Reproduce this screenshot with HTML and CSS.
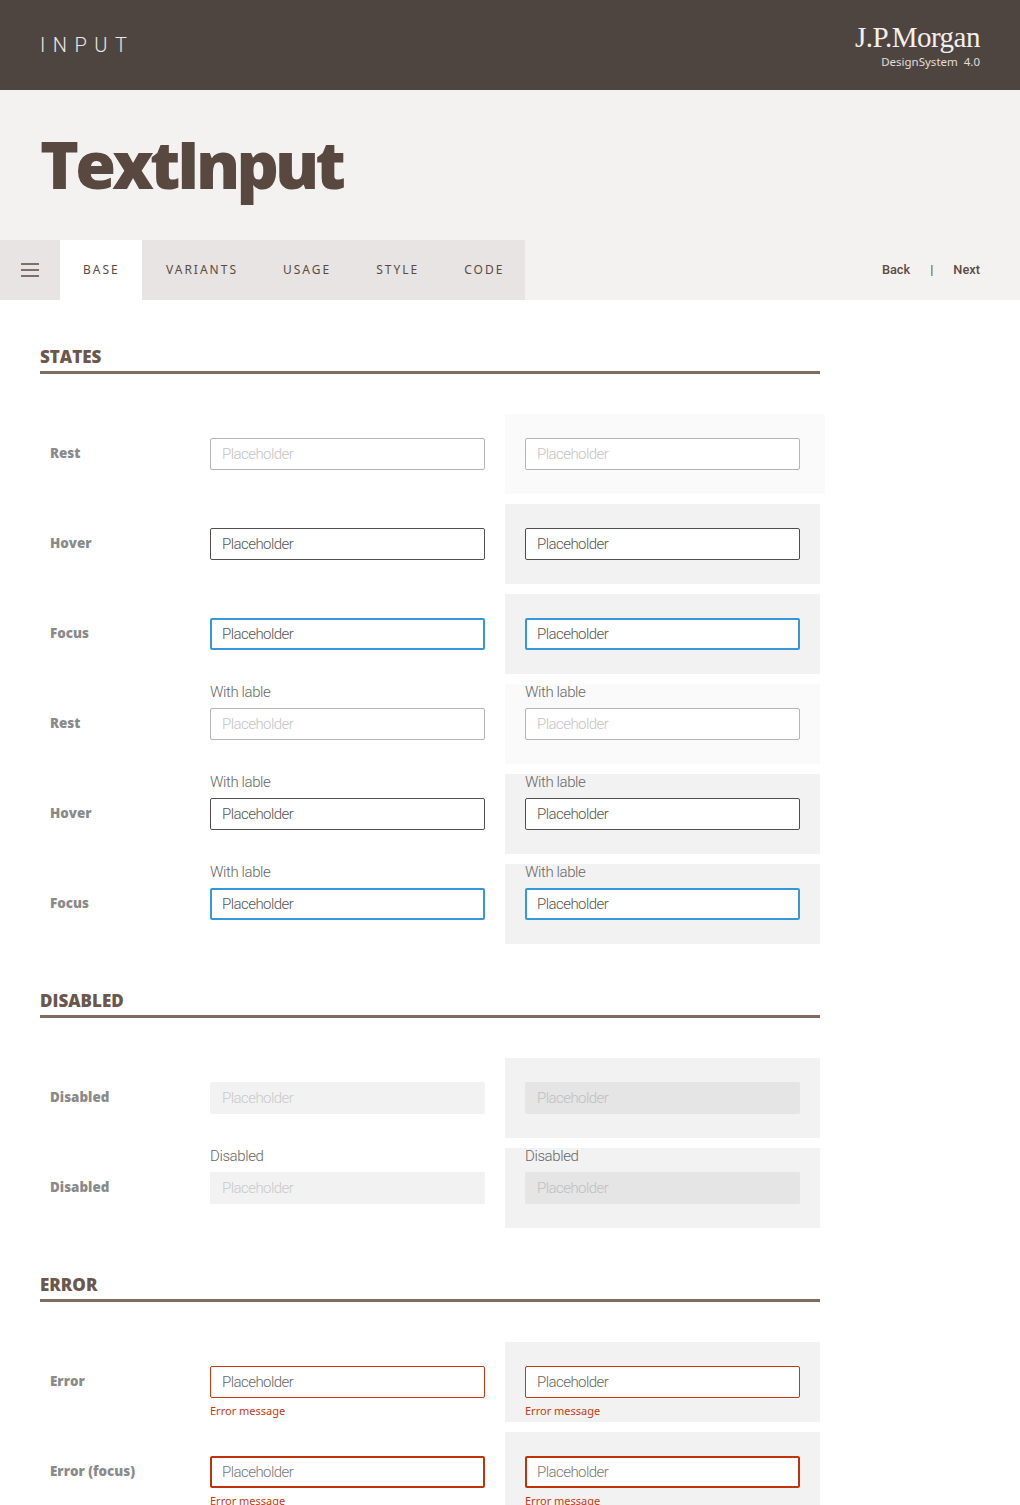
FILE: index.html
```html
<!DOCTYPE html>
<html lang="en">
<head>
<meta charset="utf-8">
<title>TextInput</title>
<link rel="stylesheet" href="styles.css">
</head>
<body>
<div class="page">
  <header class="top">
    <div class="top-title">INPUT</div>
    <div class="brand">
      <div class="brand-name">J.P.Morgan</div>
      <div class="brand-sub">DesignSystem&nbsp; 4.0</div>
    </div>
  </header>
  <div class="hero"><h1 class="hero-title">TextInput</h1></div>
  <nav class="nav">
    <div class="tabs">
      <div class="burger"><svg width="18" height="14" viewBox="0 0 18 14"><path d="M0 1h18M0 7h18M0 13h18" stroke="#5a4a42" stroke-width="1.6" fill="none"/></svg></div>
      <div class="tab tab-active">BASE</div>
      <div class="tab">VARIANTS</div>
      <div class="tab">USAGE</div>
      <div class="tab">STYLE</div>
      <div class="tab">CODE</div>
    </div>
    <div class="pager"><span>Back</span><span class="sep">|</span><span>Next</span></div>
  </nav>

  <section class="section">
    <h2 class="section-title">STATES</h2>
    <div class="rows">
      <div class="row">
        <div class="row-name">Rest</div>
        <div class="cell"><div class="input rest">Placeholder</div></div>
        <div class="cell panel-light panel-wide"><div class="input rest">Placeholder</div></div>
      </div>
      <div class="row">
        <div class="row-name">Hover</div>
        <div class="cell"><div class="input hover">Placeholder</div></div>
        <div class="cell panel"><div class="input hover">Placeholder</div></div>
      </div>
      <div class="row">
        <div class="row-name">Focus</div>
        <div class="cell"><div class="input focus">Placeholder</div></div>
        <div class="cell panel"><div class="input focus">Placeholder</div></div>
      </div>
      <div class="row">
        <div class="row-name">Rest</div>
        <div class="cell labelled"><div class="lbl">With lable</div><div class="input rest">Placeholder</div></div>
        <div class="cell labelled panel-light"><div class="lbl">With lable</div><div class="input rest">Placeholder</div></div>
      </div>
      <div class="row">
        <div class="row-name">Hover</div>
        <div class="cell labelled"><div class="lbl">With lable</div><div class="input hover">Placeholder</div></div>
        <div class="cell labelled panel"><div class="lbl">With lable</div><div class="input hover">Placeholder</div></div>
      </div>
      <div class="row">
        <div class="row-name">Focus</div>
        <div class="cell labelled"><div class="lbl">With lable</div><div class="input focus">Placeholder</div></div>
        <div class="cell labelled panel"><div class="lbl">With lable</div><div class="input focus">Placeholder</div></div>
      </div>
    </div>
  </section>

  <section class="section">
    <h2 class="section-title">DISABLED</h2>
    <div class="rows">
      <div class="row">
        <div class="row-name">Disabled</div>
        <div class="cell"><div class="input disabled">Placeholder</div></div>
        <div class="cell panel"><div class="input disabled-on-panel">Placeholder</div></div>
      </div>
      <div class="row">
        <div class="row-name">Disabled</div>
        <div class="cell labelled"><div class="lbl">Disabled</div><div class="input disabled">Placeholder</div></div>
        <div class="cell labelled panel"><div class="lbl">Disabled</div><div class="input disabled-on-panel">Placeholder</div></div>
      </div>
    </div>
  </section>

  <section class="section">
    <h2 class="section-title">ERROR</h2>
    <div class="rows">
      <div class="row">
        <div class="row-name">Error</div>
        <div class="cell"><div class="input error">Placeholder</div><div class="msg">Error message</div></div>
        <div class="cell panel"><div class="input error">Placeholder</div><div class="msg">Error message</div></div>
      </div>
      <div class="row">
        <div class="row-name">Error (focus)</div>
        <div class="cell"><div class="input error-focus">Placeholder</div><div class="msg">Error message</div></div>
        <div class="cell panel"><div class="input error-focus">Placeholder</div><div class="msg">Error message</div></div>
      </div>
    </div>
  </section>
</div>
</body>
</html>
```
FILE: styles.css
```css
* { box-sizing: border-box; }
html, body { margin: 0; padding: 0; background: #fff; }
.page { width: 1020px; height: 1505px; overflow: hidden; font-family: Roboto, sans-serif; }

.top { height: 90px; background: #4f4540; display: flex; justify-content: space-between; align-items: center; padding: 0 40px; color: #fff; }
.top-title { font-family: Roboto, sans-serif; font-weight: 300; font-size: 20px; line-height: 24px; letter-spacing: 7.5px; color: #ece8e6; margin-bottom: 1px; }
.brand { display: flex; flex-direction: column; align-items: flex-end; }
.brand-name { font-family: "Liberation Serif", serif; font-size: 29px; line-height: 32px; letter-spacing: -0.5px; color: #f2efee; margin-top: 1px; }
.brand-sub { font-family: "Noto Sans", sans-serif; font-size: 11.5px; line-height: 16px; color: #e2dedc; margin-top: 1px; }

.hero { height: 150px; background: #f4f2f1; padding: 0 40px; display: flex; align-items: center; }
.hero-title { margin: 0 0 5px; font-family: "Open Sans", sans-serif; font-weight: 800; font-size: 66px; line-height: 90px; letter-spacing: -3.75px; color: #58483f; }

.nav { height: 60px; background: #f4f2f1; display: flex; justify-content: space-between; align-items: stretch; padding-right: 40px; }
.tabs { display: flex; background: #e7e4e3; }
.burger { width: 60px; display: flex; align-items: center; justify-content: center; }
.tab { display: flex; align-items: center; padding: 0 21px 0 24px; font-family: "Noto Sans", sans-serif; font-size: 12px; line-height: 16px; letter-spacing: 2px; color: #5a4a42; margin-top: -1px; }
.tab-active { background: #fff; width: 82px; padding-left: 23px; margin-top: 0; padding-bottom: 1px; }
.pager { display: flex; align-items: center; font-size: 12.8px; font-weight: 500; color: #5a4a42; margin-top: -1px; }
.sep { margin: 0 20px; font-weight: 400; }

.section { padding: 44px 0 0 40px; }
.section-title { width: 780px; margin: 0 0 40px; height: 30px; border-bottom: 3px solid #7f6b60; font-family: "Open Sans", sans-serif; font-weight: 800; font-size: 17px; line-height: 25px; color: #6b574c; }
.rows { display: grid; gap: 10px; }
.row { display: grid; grid-template-columns: 170px 295px 315px; height: 80px; }
.row-name { padding: 30px 0 0 10px; font-family: "Open Sans", sans-serif; font-weight: 800; font-size: 13.4px; line-height: 18px; color: #8a8a8a; }

.cell { padding-top: 24px; }
.cell .input { width: 275px; }
.panel, .panel-light { padding-left: 20px; }
.panel { background: #f2f2f2; }
.panel-light { background: #fafafa; }
.panel-wide { width: 320px; }
.labelled { padding-top: 0; }
.lbl { height: 24px; font-family: Roboto, sans-serif; font-weight: 300; font-size: 15px; line-height: 16px; letter-spacing: -0.4px; color: #666; }

.input { height: 32px; border-radius: 2px; border: 1px solid #b5b5b5; background: #fff; padding: 0 11px; font-family: Roboto, sans-serif; font-weight: 300; font-size: 15px; line-height: 30px; letter-spacing: -0.55px; color: #555; }
.rest { color: #c4c4c4; }
.hover { border-color: #4f4f4f; }
.focus { border: 2px solid #3498db; padding: 0 10px; line-height: 28px; }
.disabled { border: 0; padding: 0 12px; line-height: 32px; background: #f2f2f2; color: #cacaca; }
.disabled-on-panel { border: 0; padding: 0 12px; line-height: 32px; background: #e5e5e5; color: #c0c0c0; }
.error { border-color: #c8390f; color: #666; }
.error-focus { border: 2px solid #c23209; padding: 0 10px; line-height: 28px; color: #777; }
.msg { font-family: "Noto Sans", sans-serif; font-size: 11px; line-height: 14px; margin-top: 6px; color: #c8390f; }
```
